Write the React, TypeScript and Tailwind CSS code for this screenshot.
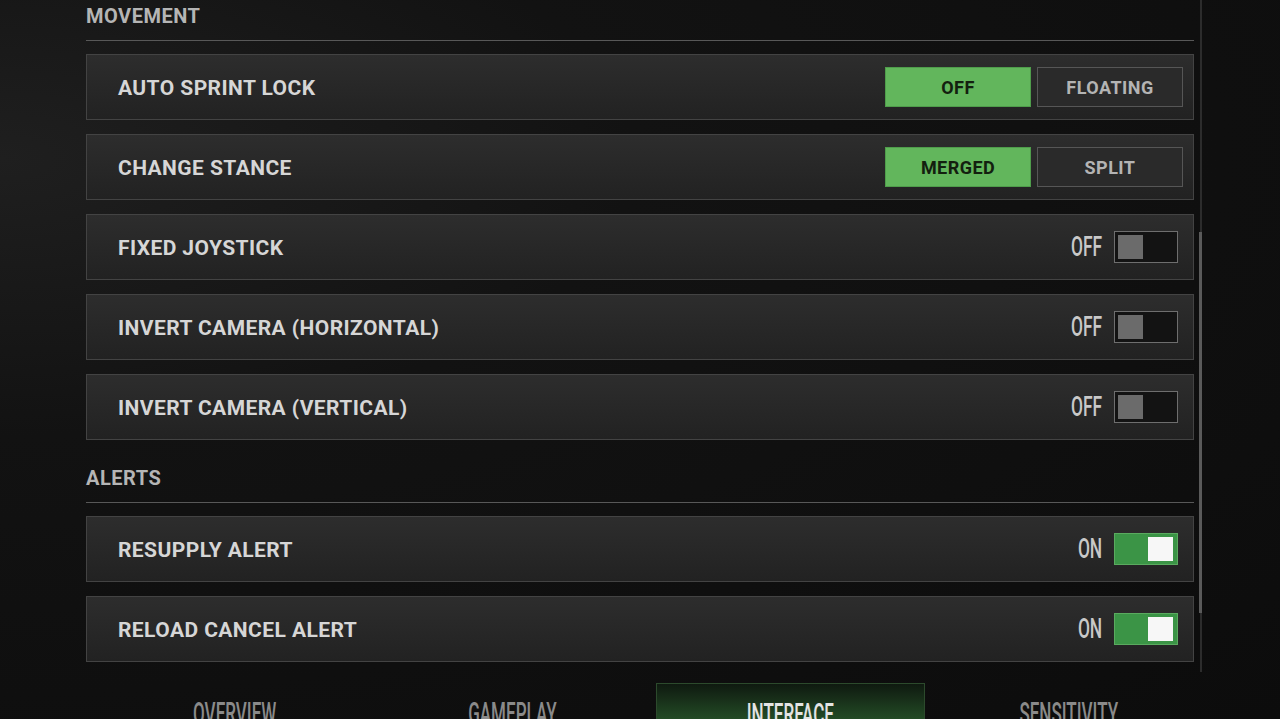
import React from "react";

type Row =
  | { label: string; kind: "segment"; options: [string, string]; active: number }
  | { label: string; kind: "toggle"; on: boolean };

const sections: { title: string; rows: Row[] }[] = [
  {
    title: "MOVEMENT",
    rows: [
      { label: "AUTO SPRINT LOCK", kind: "segment", options: ["OFF", "FLOATING"], active: 0 },
      { label: "CHANGE STANCE", kind: "segment", options: ["MERGED", "SPLIT"], active: 0 },
      { label: "FIXED JOYSTICK", kind: "toggle", on: false },
      { label: "INVERT CAMERA (HORIZONTAL)", kind: "toggle", on: false },
      { label: "INVERT CAMERA (VERTICAL)", kind: "toggle", on: false },
    ],
  },
  {
    title: "ALERTS",
    rows: [
      { label: "RESUPPLY ALERT", kind: "toggle", on: true },
      { label: "RELOAD CANCEL ALERT", kind: "toggle", on: true },
    ],
  },
];

const tabs = ["OVERVIEW", "GAMEPLAY", "INTERFACE", "SENSITIVITY"];

function Segment({ options, active }: { options: [string, string]; active: number }) {
  return (
    <div className="flex gap-[6px] pr-[10px]">
      {options.map((opt, i) =>
        i === active ? (
          <div
            key={opt}
            className="w-[146px] h-[40px] flex items-center justify-center bg-[#62b65c] border border-[#4f9d4b] text-[#13200f] text-[18px] font-bold tracking-wide"
          >
            {opt}
          </div>
        ) : (
          <div
            key={opt}
            className="w-[146px] h-[40px] flex items-center justify-center bg-[#2a2a2a] border border-[#565656] text-[#b4b4b4] text-[18px] font-bold tracking-wide"
          >
            {opt}
          </div>
        )
      )}
    </div>
  );
}

function Toggle({ on }: { on: boolean }) {
  return (
    <div className="flex items-center gap-[12px] pr-[15px]">
      <div className="w-[40px] flex justify-end">
        <span className="inline-block shrink-0 origin-right scale-x-[0.62] text-[28px] leading-none font-medium text-[#c8c8c8]">
          {on ? "ON" : "OFF"}
        </span>
      </div>
      {on ? (
        <div className="w-[64px] h-[32px] border border-[#5aaa5f] bg-[#3b9446] flex justify-end items-center pr-[4px]">
          <div className="w-[25px] h-[24px] bg-[#f7f7f7]" />
        </div>
      ) : (
        <div className="w-[64px] h-[32px] border border-[#6e6e6e] bg-[#131313] flex items-center pl-[3px]">
          <div className="w-[25px] h-[24px] bg-[#6b6b6b]" />
        </div>
      )}
    </div>
  );
}

export default function App() {
  return (
    <div
      className="w-[1280px] h-[719px] overflow-hidden bg-[#0d0d0d] bg-[radial-gradient(ellipse_at_0%_22%,#1f1f1f_0%,#121212_35%,#0c0c0c_100%)]"
      style={{ fontFamily: "Roboto, 'Liberation Sans', sans-serif" }}
    >
      <div className="flex h-[672px] overflow-hidden">
        <div className="ml-[86px] w-[1108px] -mt-[22px]">
          {sections.map((sec) => (
            <div key={sec.title}>
              <div className="h-[63px] border-b border-[#585858] pt-[28px]">
                <span className="text-[20px] leading-[20px] font-bold text-[#b5b5b5] tracking-wide">
                  {sec.title}
                </span>
              </div>
              <div className="flex flex-col gap-[14px] pt-[13px]">
                {sec.rows.map((row) => (
                  <div
                    key={row.label}
                    className="h-[66px] border border-[#434343] bg-gradient-to-b from-[#2d2d2d] to-[#222222] flex items-center justify-between"
                  >
                    <span className="pl-[31px] pt-[3px] text-[21px] font-bold text-[#d6d6d6] tracking-[0.02em]">
                      {row.label}
                    </span>
                    {row.kind === "segment" ? (
                      <Segment options={row.options} active={row.active} />
                    ) : (
                      <Toggle on={row.on} />
                    )}
                  </div>
                ))}
              </div>
            </div>
          ))}
        </div>
        <div className="ml-[5px] w-[3px] h-[672px] flex flex-col items-center">
          <div className="w-[2px] h-[232px] bg-[#2c2c2c]" />
          <div className="w-[3px] h-[381px] bg-[#5a5a5a]" />
          <div className="w-[2px] flex-1 bg-[#2c2c2c]" />
        </div>
      </div>
      <div className="h-[47px] pl-[100px] grid grid-cols-[repeat(4,269px)] gap-[9px] pt-[11px]">
        {tabs.map((t) =>
          t === "INTERFACE" ? (
            <div
              key={t}
              className="bg-gradient-to-b from-[#0f1a10] via-[#1c3a1e] to-[#2a5a2c] border-x border-t border-[#2c4a2c] flex justify-center pt-[15px]"
            >
              <span className="inline-block scale-x-[0.55] text-[31px] leading-none font-medium text-[#e4e4e4]">
                {t}
              </span>
            </div>
          ) : (
            <div key={t} className="flex justify-center pt-[15px]">
              <span className="inline-block scale-x-[0.55] text-[31px] leading-none font-medium text-[#8a8a8a]">
                {t}
              </span>
            </div>
          )
        )}
      </div>
    </div>
  );
}
